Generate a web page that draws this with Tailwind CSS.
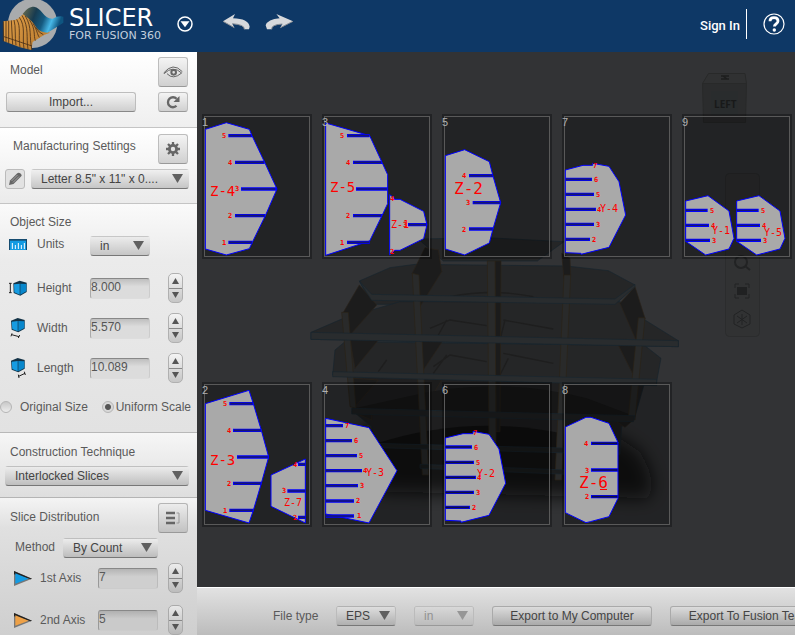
<!DOCTYPE html>
<html lang="en">
<head>
<meta charset="utf-8">
<title>Slicer for Fusion 360</title>
<script src="https://cdn.jsdelivr.net/npm/@tailwindcss/browser@4"></script>
</head>
<body class="flex h-screen flex-col overflow-hidden bg-[#323335] font-['Liberation_Sans',Arial,sans-serif] text-xs text-[#5a5a5a]">
<header class="flex h-[52px] shrink-0 items-center bg-[#0e3866] text-white">
  <svg class="h-[52px] w-16 shrink-0" viewBox="0 0 192 156" aria-hidden="true">
    <defs>
      <linearGradient id="wave" x1="0" y1="0" x2="1" y2=".25"><stop offset="0" stop-color="#6f7050"/><stop offset=".35" stop-color="#173b50"/><stop offset=".6" stop-color="#155a80"/><stop offset=".8" stop-color="#48b9e8"/><stop offset="1" stop-color="#0f5580"/></linearGradient>
      <linearGradient id="wood" x1="0" y1="0" x2="1" y2="1"><stop offset="0" stop-color="#e0a04a"/><stop offset="1" stop-color="#b8792c"/></linearGradient>
    </defs>
    <circle cx="98" cy="70" r="74" fill="#a9abad"/>
    <path d="M10 64L44 60C62 56 72 34 88 26C120 30 110 90 150 98Q128 104 114 116L98 126L94 150L60 142L12 124Z" fill="url(#wood)"/>
    <path d="M68 42C80 26 88 20 102 20C124 22 132 58 158 56Q176 46 190 50V68Q166 84 142 98Q122 98 110 84Q98 62 68 42Z" fill="url(#wave)"/>
    <path d="M10 64V124M18 62V126M26 62V130M34 61L38 134M42 60C48 80 44 110 48 136M50 58C64 80 54 110 60 142M58 52C78 80 66 110 72 146M66 46C88 84 78 110 84 148M76 48C98 84 86 110 96 150M88 59C108 88 100 106 106 122M99 70C112 92 112 104 118 112M107 82Q118 100 130 104M12 110L60 126L96 138" fill="none" stroke="#4a3018" stroke-width="2.500"/>
  </svg>
  <div class="mb-1 ml-[5px] w-[96px] whitespace-nowrap font-['DejaVu_Sans',sans-serif]">
    <div class="text-2xl leading-6">SLICER</div>
    <div class="text-[11px] leading-3 text-[#c3cfdd]">FOR FUSION 360</div>
  </div>
  <button aria-label="Menu" class="mb-1 ml-3 flex size-4 shrink-0 items-center justify-center">
    <svg class="size-4" viewBox="0 0 16 16"><circle cx="8" cy="8" r="7" fill="none" stroke="#fff" stroke-width="1.5"/><path d="M3.5 5.3h9L8 11.3z" fill="#fff"/></svg>
  </button>
  <button aria-label="Undo" class="mb-2 ml-[30px] shrink-0"><svg class="h-4 w-7" viewBox="0 0 84 48"><path d="M0 22L36 0L30 13Q76 14 80 38L78 46H64Q66 32 28 29L34 41Z" fill="#d7d9dc"/><path d="M28 29Q66 32 64 46M0 22L34 41" stroke="#8b8f95" stroke-width="3" fill="none"/></svg></button>
  <button aria-label="Redo" class="mb-2 ml-3.5 shrink-0"><svg class="h-4 w-7" viewBox="0 0 84 48"><path d="M84 22L34 0L44 13Q8 16 2 34L6 46H20Q18 32 52 30L46 41Z" fill="#d7d9dc"/><path d="M52 30Q18 32 20 46M84 22L46 41" stroke="#8b8f95" stroke-width="3" fill="none"/></svg></button>
  <div class="mb-1 ml-auto flex items-center pr-2.5">
    <a href="#" class="pt-1 font-[Roboto,sans-serif] text-[13px] leading-4 font-medium">Sign In</a>
    <span class="mr-4 ml-1.5 h-[30px] w-px bg-white"></span>
    <button aria-label="Help"><svg class="size-[22px]" viewBox="0 0 22 22"><circle cx="11" cy="11" r="10" fill="none" stroke="#fff" stroke-width="1.2"/><path d="M7 8.2Q7 4.6 11 4.6T15 8Q15 9.6 13 11Q11.4 12 11.4 13.6" fill="none" stroke="#fff" stroke-width="2.8"/><circle cx="11.3" cy="17" r="1.7" fill="#fff"/></svg></button>
  </div>
</header>

<div class="flex min-h-0 flex-1">
<aside class="w-[197px] shrink-0 overflow-hidden bg-[#d0d0d0]">
  <section class="h-[75px] bg-linear-to-b from-white to-[#efefef] pt-[5px] pr-[9px] pl-1.5">
    <div class="flex h-[30px] justify-between"><h2 class="pt-[5px] pl-1 leading-4">Model</h2>
      <button aria-label="View model" class="flex size-[30px] items-center justify-center rounded-[3px] border border-[#bdbdbd] border-b-[#999] bg-linear-to-b from-[#f4f4f4] to-[#d0d0d0]"><svg class="h-3.5 w-5" viewBox="0 0 60 42" fill="none" stroke="#666"><path d="M2 24Q30-10 58 20M3 26Q30 0 56 24Q30 46 12 26" stroke-width="3"/><circle cx="32" cy="22" r="7" stroke-width="6"/></svg></button></div>
    <div class="mt-[5px] flex h-5 justify-between">
      <button class="w-[130px] rounded-[3px] border border-[#bdbdbd] border-b-[#888] bg-linear-to-b from-[#f5f5f5] to-[#cfcfcf] text-[#444]">Import...</button>
      <button aria-label="Refresh" class="flex w-[30px] items-center justify-center rounded-[3px] border border-[#bdbdbd] border-b-[#999] bg-linear-to-b from-[#f4f4f4] to-[#d0d0d0]"><svg class="size-3.5" viewBox="0 0 14 14"><path d="M10.5 10.8A5 5 0 1 1 10.6 3.8" fill="none" stroke="#666" stroke-width="2.3"/><path d="M13.5 1V7H7.5Z" fill="#666"/></svg></button>
    </div>
  </section>
  <section class="h-[76px] border-t border-[#c4c4c4] bg-linear-to-b from-white to-[#ebebeb] pt-1.5 pr-2 pl-[5px]">
    <div class="flex h-[30px] justify-between pr-px"><h2 class="pt-1 pl-2 leading-4">Manufacturing Settings</h2>
      <button aria-label="Settings" class="flex size-[30px] items-center justify-center rounded-[3px] border border-[#bdbdbd] border-b-[#999] bg-linear-to-b from-[#f4f4f4] to-[#d0d0d0]"><svg class="size-3.5" viewBox="-7 -7 14 14" fill="none" stroke="#666"><circle r="3.6" stroke-width="2.8"/><path d="M0-4V-7M0 4V7M-4 0H-7M4 0H7M-3-3L-5-5M3 3L5 5M3-3L5-5M-3 3L-5 5" stroke-width="2.3"/></svg></button></div>
    <div class="mt-[5px] flex items-center justify-between">
      <button aria-label="Edit" class="flex size-5 items-center justify-center rounded-[3px] border border-[#bbb] bg-[#e2e2e2]"><svg class="size-3.5" viewBox="0 0 14 14"><path d="M1 13L2 8.500L9 1.5Q10.500 0 12.5 1.5T12.5 5L5.500 12Z" fill="#666"/><path d="M3.5 9L9.5 3M5 10.5L11 4.5" stroke="#bbb" stroke-width=".7"/></svg></button>
      <div class="relative w-[158px]"><select aria-label="Sheet size" class="block h-5 w-full appearance-none rounded-[3px] border border-transparent border-b-[#777] bg-linear-to-b from-[#f0f0f0] to-[#c6c6c6] pl-[9px] text-[#444]"><option>Letter 8.5" x 11" x 0....</option></select><svg class="pointer-events-none absolute top-[5px] right-1.5 h-[9px] w-[11px]" viewBox="0 0 11 9"><path d="M0 0H11L5.500 9Z" fill="#606060"/></svg></div>
    </div>
  </section>
  <section class="h-[229px] border-t border-[#c4c4c4] bg-linear-to-b from-[#fafafa] via-[#ebebeb] via-25% to-[#e2e2e2] pt-2.5">
    <h2 class="pl-2.5 leading-4">Object Size</h2>
    <div class="mt-1 flex h-5 items-center pl-[9px]">
      <svg class="h-[11px] w-[18px]" viewBox="0 0 54 33"><path d="M0 0H54V33H0Z" fill="#164c70"/><path d="M3 5H51V33H3Z" fill="#139be3"/><path d="M10 12V30M19 18V30M28 12V30M37 18V30M46 12V30" stroke="#fff" stroke-width="3"/></svg>
      <label for="units" class="ml-2.5 w-[53px]">Units</label>
      <div class="relative mt-1 w-[60px]"><select id="units" class="block h-5 w-full appearance-none rounded-[3px] border border-transparent border-b-[#777] bg-linear-to-b from-[#ececec] to-[#c6c6c6] pl-[9px] text-[#444]"><option>in</option></select><svg class="pointer-events-none absolute top-[5px] right-1.5 h-[9px] w-[11px]" viewBox="0 0 11 9"><path d="M0 0H11L5.500 9Z" fill="#606060"/></svg></div>
    </div>
    <div class="mt-[19px] flex flex-col gap-2.5">
      <div class="flex h-[30px] items-center pr-3.5 pl-[9px]">
        <svg class="h-5 w-[18px]" viewBox="0 0 54 60"><path d="M0 16H8M4 16V44M0 44H8" stroke="#222" stroke-width="3"/><path d="M13 16L32 8L53 14V42L34 53L14 45Z" fill="#123246"/><path d="M15 19L32 17V50L16 43Z" fill="#169ce2"/><path d="M34 17L52 18V40L34 50Z" fill="#0887cc"/></svg>
        <label for="height" class="ml-2.5 w-[53px]">Height</label>
        <input id="height" value="8.000" class="h-[21px] w-[60px] rounded-[3px] border border-t-[#888] border-r-[#ccc] border-b-[#ddd] border-l-[#aaa] bg-linear-to-b from-[#bfbfbf] to-[#dcdcdc] to-40% pb-0.5 text-[#555]">
        <div class="ml-auto flex h-[30px] w-[15px] flex-col overflow-hidden rounded-[5px] border border-[#b0b0b0] bg-linear-to-b from-[#f4f4f4] to-[#c6c6c6]"><button aria-label="Increase height" class="flex flex-1 items-center justify-center border-b border-[#888]"><svg class="h-1.5 w-[7px]" viewBox="0 0 7 6"><path d="M0 6L3.500 0L7 6Z" fill="#555"/></svg></button><button aria-label="Decrease height" class="flex flex-1 items-center justify-center"><svg class="h-1.5 w-[7px]" viewBox="0 0 7 6"><path d="M0 0H7L3.500 6Z" fill="#555"/></svg></button></div>
      </div>
      <div class="flex h-[30px] items-center pr-3.5 pl-[9px]">
        <svg class="h-5 w-[18px]" viewBox="0 0 54 60"><path d="M6 8L26 0L47 6V32L28 43L8 35Z" fill="#123246"/><path d="M8 11L26 9V40L10 33Z" fill="#169ce2"/><path d="M28 9L46 10V30L28 40Z" fill="#0887cc"/><path d="M9 46L6 55M8 50L30 56M32 51L28 60" stroke="#222" stroke-width="3"/></svg>
        <label for="width" class="ml-2.5 w-[53px]">Width</label>
        <input id="width" value="5.570" class="h-[21px] w-[60px] rounded-[3px] border border-t-[#888] border-r-[#ccc] border-b-[#ddd] border-l-[#aaa] bg-linear-to-b from-[#bfbfbf] to-[#dcdcdc] to-40% pb-0.5 text-[#555]">
        <div class="ml-auto flex h-[30px] w-[15px] flex-col overflow-hidden rounded-[5px] border border-[#b0b0b0] bg-linear-to-b from-[#f4f4f4] to-[#c6c6c6]"><button aria-label="Increase width" class="flex flex-1 items-center justify-center border-b border-[#888]"><svg class="h-1.5 w-[7px]" viewBox="0 0 7 6"><path d="M0 6L3.500 0L7 6Z" fill="#555"/></svg></button><button aria-label="Decrease width" class="flex flex-1 items-center justify-center"><svg class="h-1.5 w-[7px]" viewBox="0 0 7 6"><path d="M0 0H7L3.500 6Z" fill="#555"/></svg></button></div>
      </div>
      <div class="flex h-[30px] items-center pr-3.5 pl-[9px]">
        <svg class="h-5 w-[18px]" viewBox="0 0 54 60"><path d="M6 8L26 0L47 6V32L28 43L8 35Z" fill="#123246"/><path d="M8 11L26 9V40L10 33Z" fill="#169ce2"/><path d="M28 9L46 10V30L28 40Z" fill="#0887cc"/><path d="M28 50L30 60M29 55L48 46M46 41L49 51" stroke="#222" stroke-width="3"/></svg>
        <label for="length" class="ml-2.5 w-[53px]">Length</label>
        <input id="length" value="10.089" class="h-[21px] w-[60px] rounded-[3px] border border-t-[#888] border-r-[#ccc] border-b-[#ddd] border-l-[#aaa] bg-linear-to-b from-[#bfbfbf] to-[#dcdcdc] to-40% pb-0.5 text-[#555]">
        <div class="ml-auto flex h-[30px] w-[15px] flex-col overflow-hidden rounded-[5px] border border-[#b0b0b0] bg-linear-to-b from-[#f4f4f4] to-[#c6c6c6]"><button aria-label="Increase length" class="flex flex-1 items-center justify-center border-b border-[#888]"><svg class="h-1.5 w-[7px]" viewBox="0 0 7 6"><path d="M0 6L3.500 0L7 6Z" fill="#555"/></svg></button><button aria-label="Decrease length" class="flex flex-1 items-center justify-center"><svg class="h-1.5 w-[7px]" viewBox="0 0 7 6"><path d="M0 0H7L3.500 6Z" fill="#555"/></svg></button></div>
      </div>
    </div>
    <div class="mt-4 flex items-center justify-between pr-1.5 whitespace-nowrap">
      <label class="flex items-center gap-2"><input type="radio" name="scale" class="size-3 appearance-none rounded-full border border-[#b5b5b5] bg-linear-to-b from-[#c8c8c8] to-[#ececec]">Original Size</label>
      <label class="flex items-center gap-0.5"><input type="radio" name="scale" checked class="size-3 appearance-none rounded-full border border-[#b5b5b5] bg-radial from-[#555] from-35% to-[#d8d8d8] to-50%">Uniform Scale</label>
    </div>
  </section>
  <section class="h-[65px] border-t border-[#b8b8b8] bg-linear-to-b from-[#f6f6f6] to-[#dedede] pt-[11px] pr-2 pl-[5px]">
    <h2 class="pl-[5px] leading-4"><label for="technique">Construction Technique</label></h2>
    <div class="relative mt-1.5"><select id="technique" class="block h-5 w-full appearance-none rounded-[3px] border border-transparent border-b-[#777] bg-linear-to-b from-[#ececec] to-[#bfbfbf] pl-[9px] text-[#444]"><option>Interlocked Slices</option></select><svg class="pointer-events-none absolute top-[5px] right-1.5 h-[9px] w-[11px]" viewBox="0 0 11 9"><path d="M0 0H11L5.500 9Z" fill="#606060"/></svg></div>
  </section>
  <section class="h-[150px] border-t border-[#b4b4b4] bg-linear-to-b from-[#f4f4f4] via-[#e0e0e0] via-20% to-[#cdcdcd] pt-[5px]">
    <div class="flex h-[30px] justify-between pr-[9px] pl-2.5"><h2 class="pt-1.5 leading-4">Slice Distribution</h2>
      <button aria-label="Distribution" class="flex size-[30px] items-center justify-center rounded-[3px] border border-[#b5b5b5] border-b-[#999] bg-linear-to-b from-[#ececec] to-[#c2c2c2]"><svg class="size-3.5" viewBox="0 0 14 14" fill="none" stroke="#666"><path d="M0 2H9M0 7H9M0 12H9" stroke-width="2.3"/><path d="M10.500 2H13V12H10.500" stroke="#999" stroke-width="1"/></svg></button></div>
    <div class="mt-[5px] flex h-5 items-center pl-[15px]"><label for="method" class="w-12 pb-[3px]">Method</label>
      <div class="relative w-[95px]"><select id="method" class="block h-5 w-full appearance-none rounded-[3px] border border-transparent border-b-[#777] bg-linear-to-b from-[#ececec] to-[#bdbdbd] pl-[9px] text-[#444]"><option>By Count</option></select><svg class="pointer-events-none absolute top-[5px] right-1.5 h-[9px] w-[11px]" viewBox="0 0 11 9"><path d="M0 0H11L5.500 9Z" fill="#606060"/></svg></div></div>
    <div class="mt-[5px] flex flex-col gap-3">
      <div class="flex h-[30px] items-center pr-3.5 pl-3.5">
        <svg class="h-[15px] w-[18px]" viewBox="0 0 54 45"><path d="M0 0L54 23L0 45Z" fill="#777"/><path d="M0 0L54 23L50 25L0 10Z" fill="#222"/><path d="M4 7L44 23L4 38Z" fill="#139be3"/></svg>
        <label for="axis1" class="ml-2 w-[58px]">1st Axis</label>
        <input id="axis1" value="7" class="h-[21px] w-[60px] rounded-[3px] border border-t-[#888] border-r-[#bbb] border-b-[#ccc] border-l-[#999] bg-linear-to-b from-[#b4b4b4] to-[#cfcfcf] to-40% pb-0.5">
        <div class="ml-auto flex h-[30px] w-[15px] flex-col overflow-hidden rounded-[5px] border border-[#aaa] bg-linear-to-b from-[#ececec] to-[#bcbcbc]"><button aria-label="Increase 1st axis" class="flex flex-1 items-center justify-center border-b border-[#888]"><svg class="h-1.5 w-[7px]" viewBox="0 0 7 6"><path d="M0 6L3.500 0L7 6Z" fill="#555"/></svg></button><button aria-label="Decrease 1st axis" class="flex flex-1 items-center justify-center"><svg class="h-1.5 w-[7px]" viewBox="0 0 7 6"><path d="M0 0H7L3.500 6Z" fill="#555"/></svg></button></div>
      </div>
      <div class="flex h-[30px] items-center pr-3.5 pl-3.5">
        <svg class="h-[15px] w-[18px]" viewBox="0 0 54 45"><path d="M0 0L54 23L0 45Z" fill="#777"/><path d="M0 0L54 23L50 25L0 10Z" fill="#222"/><path d="M4 7L44 23L4 38Z" fill="#eea147"/></svg>
        <label for="axis2" class="ml-2 w-[58px]">2nd Axis</label>
        <input id="axis2" value="5" class="h-[21px] w-[60px] rounded-[3px] border border-t-[#888] border-r-[#bbb] border-b-[#ccc] border-l-[#999] bg-linear-to-b from-[#b0b0b0] to-[#cacaca] to-40% pb-0.5">
        <div class="ml-auto flex h-[30px] w-[15px] flex-col overflow-hidden rounded-[5px] border border-[#aaa] bg-linear-to-b from-[#e8e8e8] to-[#b8b8b8]"><button aria-label="Increase 2nd axis" class="flex flex-1 items-center justify-center border-b border-[#888]"><svg class="h-1.5 w-[7px]" viewBox="0 0 7 6"><path d="M0 6L3.500 0L7 6Z" fill="#555"/></svg></button><button aria-label="Decrease 2nd axis" class="flex flex-1 items-center justify-center"><svg class="h-1.5 w-[7px]" viewBox="0 0 7 6"><path d="M0 0H7L3.500 6Z" fill="#555"/></svg></button></div>
      </div>
    </div>
  </section>
</aside>

<main class="flex min-w-0 flex-1 flex-col">
<svg class="min-h-0 w-full flex-1" viewBox="197 52 598 535" preserveAspectRatio="xMinYMin meet" role="img" aria-label="Cut sheets over the sliced model">
  <defs>
    <filter id="soft" x="-20%" y="-30%" width="140%" height="160%"><feGaussianBlur stdDeviation="26"/></filter>
    <g id="frame"><rect x="202" y="114" width="110" height="145" fill="#000" fill-opacity=".3"/><rect x="204.500" y="116.500" width="105" height="140" fill="none" stroke="#595959"/></g>
  </defs>
  <rect x="197" y="52" width="598" height="535" fill="#323335"/>
  <!-- assembled model -->
  <g transform="translate(300 225) scale(.33333)">
    <path d="M200 600Q600 500 960 640L1020 680Q1080 780 1040 820L240 800Q150 700 200 600Z" fill="#0b0b0b" fill-opacity=".85" filter="url(#soft)"/>
    <g fill="#252627" stroke="#17242d" stroke-width="2">
      <path d="M355 42L560 38L792 50L712 108H430Z"/>
      <path d="M178 168L270 128L345 118L800 123L925 137L1005 180L945 238H215Z"/>
      <path d="M33 322L130 280L300 230H960L1035 285L1135 347V365L33 343Z"/>
      <path d="M98 450L105 375L135 350L1035 362L1083 400L1068 480Z"/>
      <path d="M150 450L160 560L215 605V655L960 675L965 605L1005 575L1035 470Z" fill="#1f1f20"/>
    </g>
    <g fill="#1c1c1c" stroke="#2b221a" stroke-width="2">
      <path d="M130 262L178 180L230 240L150 330Z"/><path d="M337 145L375 68L415 75L425 140L357 250Z"/>
      <path d="M1035 280L1005 185L960 235L1010 350Z"/><path d="M792 160L785 85L810 100L812 150Z"/>
      <path d="M150 342L235 345L165 430Z"/><path d="M357 340L430 345L370 435Z"/>
      <path d="M160 460L235 465L165 545Z"/><path d="M370 460L425 465L378 545Z"/><path d="M1010 350L950 350L1000 450Z"/>
      <path d="M155 560H215V585ZM950 590L1000 585L975 607Z"/>
    </g>
    <path d="M165 550L320 515Q590 450 860 520L1000 572Z" fill="#171717"/>
    <path d="M230 655Q590 540 960 675Z" fill="#111"/>
    <path d="M450 215Q580 190 700 215M390 310L450 285L560 302M610 285L760 312M400 425L450 390L560 410M610 385L760 415M260 405L235 440M440 285L415 330M615 285L600 345M440 390L400 445M625 400L600 450" fill="none" stroke="#1e1e1e" stroke-width="4"/>
    <g fill="#292a2a" stroke="#2b2217" stroke-width="2">
      <path d="M125 262H145L168 550L150 545Z"/><path d="M337 145L357 150L386 750H367Z"/><path d="M585 108H603L600 620H588Z" fill="#1b1b1b"/><path d="M562 108H585L588 655H567Z"/><path d="M792 150H812L785 765H765Z"/><path d="M1015 278H1035L1005 585L985 575Z"/>
    </g>
    <g fill="#292c2e" stroke="#18262f" stroke-width="2">
      <path d="M178 168L215 208L945 222L1005 178V185L945 238L215 226Z"/><path d="M33 322L1135 347V365L33 343Z"/><path d="M98 440L1070 463V482L98 455Z"/>
      <path d="M155 550L1005 572L1000 590L155 567Z" fill="#202223"/><path d="M215 655L960 673V688L230 668Z" fill="#1b1d1e"/><path d="M360 718L800 735V748L360 730Z" fill="#1b1d1e"/>
    </g>
  </g>
  <!-- view cube and navigation bar -->
  <g fill="#303132" stroke="#282929"><path d="M708.500 73.500H745L746.500 83.500H702.500Z"/><path d="M702.500 83.500H746.500L745.500 122.500H703.500Z" fill="#2b2c2d"/></g>
  <path d="M711 91H738V115H711Z" fill="#292c2d"/>
  <text x="714" y="108" class="text-[10px] font-bold" style="font-family:'Open Sans'" fill="#181919">LEFT</text>
  <path d="M721 76H729M721 79H729M723 76L727 79" stroke="#1d1e1e" stroke-width="1.500"/>
  <rect x="725.500" y="173.500" width="34" height="163" rx="4" fill="#313233" stroke="#2b2c2d"/>
  <g fill="none" stroke="#222324" stroke-width="2"><circle cx="741" cy="262" r="6"/><path d="M745 266L750 270"/><path d="M735 288V284H739M745 284H749V288M749 294V298H745M739 298H735V294M742 310L750 315V324L742 328L734 324V315ZM742 314V325M737 316L747 323M747 316L737 323" stroke-width="1"/></g><rect x="737" y="287" width="10" height="8" fill="#202122"/>
  <!-- sheets -->
  <use href="#frame"/><use href="#frame" x="120"/><use href="#frame" x="240"/><use href="#frame" x="360"/><use href="#frame" x="480"/>
  <use href="#frame" y="268"/><use href="#frame" x="120" y="268"/><use href="#frame" x="240" y="268"/><use href="#frame" x="360" y="268"/>
  <g fill="#a9a9a9" stroke="#00f" stroke-width="3">
    <g transform="translate(197 105) scale(.33333)">
      <path d="M25 73L88 53L157 73L165 92L203 172L240 252L205 332L166 412L157 431L88 450L25 432Z"/>
      <path d="M386 54L518 92L555 172L572 209V296L555 332L518 408L386 451Z"/>
      <path d="M578 269L591 278V283H609L680 319L690 359L680 401L609 436H593L578 450Z"/>
      <path d="M94 92H165M114 172H203M132 252H240M114 332H205M94 412H166M450 92H518M468 172H555M477 252H572M468 332H555M450 412H518M633 359H690" stroke-width="10"/>
      <path d="M97 92H162M117 172H200M135 252H234M117 332H202M97 412H164M453 92H516M471 172H552M480 252H569M471 332H552M453 412H516M636 359H687" stroke="#17176e" stroke-width="5"/>
    </g>
    <g transform="translate(437 105) scale(.33333)">
      <path d="M25 152L83 134L157 170L168 213L191 293L168 372L157 414L83 450L25 432Z"/>
      <path d="M385 195L438 181H467V175L516 184L546 230L566 330L516 427L432 448V445L385 443Z"/>
      <path d="M96 212H168M107 293H191M96 372H168M386 223H465M386 268H471M386 313H477M386 358H471M386 403H459" stroke-width="10"/>
      <path d="M99 212H166M110 293H188M99 372H166M386 223H462M386 268H468M386 313H474M386 358H468M386 403H456" stroke="#17176e" stroke-width="5"/>
    </g>
    <g transform="translate(660 60) scale(.33333)">
      <path id="petal" d="M77 423L144 407L207 453L222 535L207 567L137 585L77 544Z"/><use href="#petal" x="153"/>
      <path d="M77 451H143M77 496H147M77 541H150M230 451H296M230 496H300M230 541H303" stroke-width="10"/>
      <path d="M77 451H140M77 496H144M77 541H147M230 451H293M230 496H297M230 541H300" stroke="#17176e" stroke-width="4"/>
    </g>
    <g transform="translate(197 375) scale(.33333)">
      <path d="M25 86L156 46L169 86L193 166L215 246L193 325L169 406L156 444L25 406Z"/>
      <path d="M222 300L325 252V444L222 394Z"/>
      <path d="M386 130L516 158L600 287L516 444L386 417Z"/>
      <path d="M97 86H169M108 166H193M120 246H215M108 325H193M97 406H169M303 268H325M271 348H325M303 427H325M386 152H438M386 197H465M386 242H480M386 287H495M386 332H483M386 378H471M386 423H471" stroke-width="10"/>
      <path d="M100 86H166M111 166H190M123 246H212M111 325H190M100 406H166M306 268H325M274 348H325M306 427H325M386 152H435M386 197H462M386 242H477M386 287H492M386 332H480M386 378H468M386 423H468" stroke="#17176e" stroke-width="5"/>
    </g>
    <g transform="translate(437 375) scale(.33333)">
      <path d="M25 189L78 176H108V169L156 178L186 222L206 325L156 421L72 442V438L25 436Z"/>
      <path d="M385 156L447 127H462L516 145L543 202V370L516 425L460 440L447 443L385 413Z"/>
      <path d="M25 216H105M25 262H111M25 307H117M25 352H111M25 397H99M462 205H543M462 285H543M462 365H543" stroke-width="10"/>
      <path d="M25 216H102M25 262H108M25 307H114M25 352H108M25 397H96M465 205H541M465 285H541M465 365H541" stroke="#101040" stroke-width="5"/>
    </g>
  </g>
  <g fill="#f00" class="text-sm" style="font-family:'DejaVu Sans Mono'">
    <text x="210" y="196">Z-4</text><text x="330" y="192">Z-5</text><text x="210" y="465">Z-3</text>
    <g class="text-base"><text x="454" y="194">Z-2</text><text x="579" y="488">Z-6</text></g><path d="M600 489.500H607" stroke="#f00"/>
    <g class="text-[10px]"><text x="391" y="228">Z-1</text><text x="600" y="212">Y-4</text><text x="712" y="234">Y-1</text><text x="764" y="236">Y-5</text><text x="284" y="506">Z-7</text><text x="477" y="477">Y-2</text><text x="366" y="476">Y-3</text></g>
  </g>
  <g fill="#f00" class="text-[7px] font-bold" style="font-family:'DejaVu Sans Mono'">
    <text x="222" y="138">5</text><text x="228" y="165">4</text><text x="235" y="191">3</text><text x="228" y="218">2</text><text x="222" y="245">1</text>
    <text x="340" y="138">5</text><text x="346" y="165">4</text><text x="346" y="218">2</text><text x="340" y="245">1</text><text x="390" y="201">4</text><text x="390" y="254">2</text><text x="403" y="227">3</text>
    <text x="462" y="178">4</text><text x="466" y="205">3</text><text x="462" y="232">2</text>
    <text x="593" y="168">7</text><text x="594" y="182">6</text><text x="596" y="197">5</text><text x="597" y="212">4</text><text x="596" y="227">3</text><text x="592" y="242">2</text>
    <text x="710" y="213">5</text><text x="711" y="228">4</text><text x="712" y="243">3</text><text x="761" y="213">5</text><text x="762" y="228">4</text><text x="763" y="243">3</text>
    <text x="223" y="406">5</text><text x="227" y="433">4</text><text x="227" y="486">2</text><text x="223" y="513">1</text><text x="293" y="467">4</text><text x="282" y="493">3</text><text x="293" y="520">2</text>
    <text x="345" y="428">7</text><text x="354" y="443">6</text><text x="359" y="458">5</text><text x="363" y="473">4</text><text x="360" y="488">3</text><text x="356" y="503">2</text><text x="357" y="518">1</text>
    <text x="473" y="435">7</text><text x="474" y="450">6</text><text x="476" y="465">5</text><text x="477" y="480">4</text><text x="476" y="495">3</text><text x="472" y="510">2</text>
    <text x="584" y="446">4</text><text x="585" y="473">3</text><text x="585" y="499">2</text>
  </g>
  <g fill="#b0b0b0" class="text-[11px]" style="font-family:'Liberation Sans'">
    <text x="202" y="126">1</text><text x="322" y="126">3</text><text x="442" y="126">5</text><text x="562" y="126">7</text><text x="682" y="126">9</text>
    <text x="202" y="394">2</text><text x="322" y="394">4</text><text x="442" y="394">6</text><text x="562" y="394">8</text>
  </g>
</svg>
<footer class="flex h-12 shrink-0 items-center overflow-hidden border-t border-white bg-linear-to-b from-[#e2e2e2] to-[#bcbcbc] pt-2 pl-[76px] whitespace-nowrap">
  <label for="filetype" class="w-[63px] shrink-0">File type</label>
  <div class="relative w-[60px] shrink-0"><select id="filetype" class="block h-5 w-full appearance-none rounded-[3px] border border-[#bbb] border-t-transparent border-b-[#777] bg-linear-to-b from-[#dedede] to-[#b0b0b0] pl-[9px] text-[#444]"><option>EPS</option></select><svg class="pointer-events-none absolute top-[5px] right-1.5 h-[9px] w-[11px]" viewBox="0 0 11 9"><path d="M0 0H11L5.500 9Z" fill="#606060"/></svg></div>
  <div class="relative ml-[18px] w-[60px] shrink-0"><select aria-label="File units" disabled class="block h-5 w-full appearance-none rounded-[3px] border border-[#bbb] border-t-transparent border-b-[#999] bg-linear-to-b from-[#d8d8d8] to-[#bcbcbc] pl-[9px] text-[#929292] opacity-100"><option>in</option></select><svg class="pointer-events-none absolute top-[5px] right-1.5 h-[9px] w-[11px]" viewBox="0 0 11 9"><path d="M0 0H11L5.500 9Z" fill="#969696"/></svg></div>
  <button class="ml-[18px] h-5 w-[160px] shrink-0 rounded-[3px] border border-[#aaa] border-b-[#777] bg-linear-to-b from-[#dcdcdc] to-[#aaa] text-[#444]">Export to My Computer</button>
  <button class="ml-[18px] h-5 w-[160px] shrink-0 rounded-[3px] border border-[#aaa] border-b-[#777] bg-linear-to-b from-[#dcdcdc] to-[#aaa] text-[#444]">Export To Fusion Team</button>
</footer>
</main>
</div>
</body>
</html>
